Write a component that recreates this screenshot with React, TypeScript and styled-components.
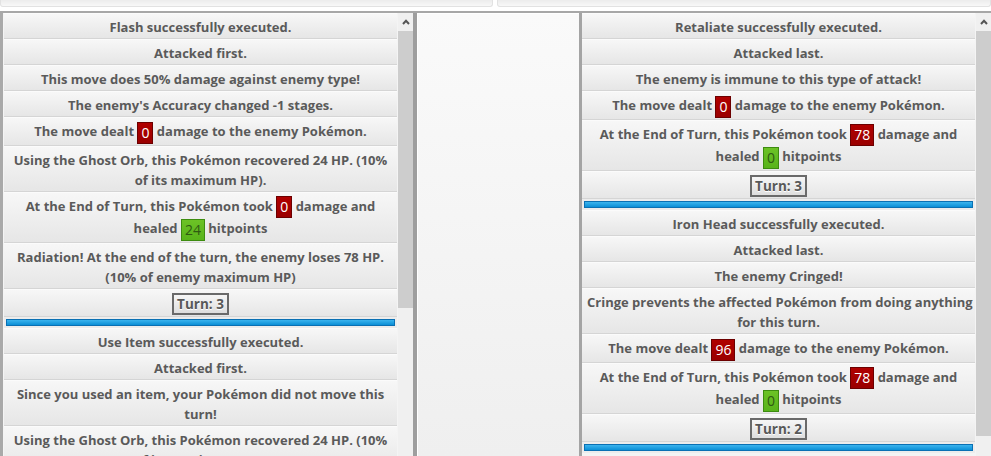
import React from 'react'
import styled, { createGlobalStyle } from 'styled-components'

const GlobalStyle = createGlobalStyle`
  html, body {
    margin: 0;
    padding: 0;
    background: #ffffff;
  }
  body {
    font-family: "Open Sans", "DejaVu Sans", sans-serif;
    overflow: hidden;
  }
`

const Page = styled.div`
  width: 991px;
  height: 456px;
  display: flex;
  flex-direction: column;
  overflow: hidden;
`

const TopBar = styled.div`
  display: flex;
  gap: 4px;
  height: 11px;
  padding-bottom: 4px;
  box-sizing: border-box;
`

const TopField = styled.div<{ $width: number }>`
  width: ${(p) => p.$width}px;
  flex: none;
  height: 7px;
  box-sizing: border-box;
  border: 1px solid #e2e2e2;
  border-top: none;
  border-radius: 0 0 3px 3px;
  background: linear-gradient(#ececec, #f8f8f8);
`

const Divider = styled.div`
  height: 2px;
  flex: none;
  background: #a7a7a7;
`

const Main = styled.div`
  flex: 1;
  min-height: 0;
  display: flex;
  overflow: hidden;
`

const SidePanel = styled.div<{ $left?: boolean }>`
  flex: none;
  width: ${(p) => (p.$left ? 417 : 409)}px;
  box-sizing: border-box;
  display: flex;
  align-items: flex-start;
  gap: 1px;
  background: #f4f4f4;
  border-left: ${(p) => (p.$left ? '3px solid #a9a9a9' : 'none')};
  border-right: ${(p) => (p.$left ? '4px solid #9e9e9e' : 'none')};
  padding-left: ${(p) => (p.$left ? 1 : 0)}px;
`

const Middle = styled.div`
  flex: none;
  width: 165px;
  box-sizing: border-box;
  border-right: 3px solid #a4a4a4;
  background: linear-gradient(#fafafa, #efefef);
  box-shadow: inset 1px 1px 0 #ffffff;
`

const Log = styled.div`
  width: 393px;
  flex: none;
  display: flex;
  flex-direction: column;
  background: #ececec;
`

const Row = styled.div`
  flex: none;
  padding: 3px 5px 1px;
  line-height: 20px;
  text-align: center;
  font-size: 13px;
  font-weight: 700;
  color: #5a5a5a;
  white-space: nowrap;
  background: linear-gradient(#f7f7f7, #e6e6e6);
  border-top: 1px solid #fbfbfb;
  border-bottom: 1px solid #d5d5d5;
`

const Badge = styled.span<{ $tone: 'red' | 'green' }>`
  display: inline-block;
  padding: 0 3px;
  line-height: 20px;
  font-size: 14px;
  font-weight: 400;
  vertical-align: middle;
  border: 1px solid ${(p) => (p.$tone === 'red' ? '#6c0000' : '#3d8c10')};
  background: ${(p) =>
    p.$tone === 'red'
      ? 'linear-gradient(#b00000, #9a0000)'
      : 'linear-gradient(#6cc226, #58b31a)'};
  color: ${(p) => (p.$tone === 'red' ? '#ffffff' : '#2f5a12')};
`

const Turn = styled.span`
  display: inline-block;
  padding: 0 3px;
  line-height: 18px;
  border: 2px solid #6a6a6a;
  background: linear-gradient(#f6f6f6, #dedede);
  color: #585858;
  font-size: 13.5px;
  font-weight: 700;
  text-shadow: 0 1px 0 #ffffff;
  vertical-align: middle;
`

const Bar = styled.div`
  flex: none;
  height: 5px;
  margin: 2px 2px;
  border: 1px solid #0a70b3;
  background: linear-gradient(#3bb4ee, #0b8fd6);
`

const Scrollbar = styled.div`
  width: 15px;
  flex: none;
  align-self: stretch;
  display: flex;
  flex-direction: column;
  background: #f0f0f0;
`

const ArrowButton = styled.div`
  height: 18px;
  flex: none;
  display: flex;
  align-items: center;
  justify-content: center;
  background: #f0f0f0;
`

const Thumb = styled.div<{ $height: number }>`
  height: ${(p) => p.$height}px;
  flex: none;
  background: #cdcdcd;
`

type Entry =
  | { kind: 'text'; content: React.ReactNode }
  | { kind: 'turn'; n: number }
  | { kind: 'bar' }

const red = (v: string) => <Badge $tone="red">{v}</Badge>
const green = (v: string) => <Badge $tone="green">{v}</Badge>

const t = (content: React.ReactNode): Entry => ({ kind: 'text', content })

const leftLog: Entry[] = [
  t('Flash successfully executed.'),
  t('Attacked first.'),
  t('This move does 50% damage against enemy type!'),
  t("The enemy's Accuracy changed -1 stages."),
  t(<>The move dealt {red('0')} damage to the enemy Pokémon.</>),
  t(<>Using the Ghost Orb, this Pokémon recovered 24 HP. (10%<br />of its maximum HP).</>),
  t(<>At the End of Turn, this Pokémon took {red('0')} damage and<br />healed {green('24')} hitpoints</>),
  t(<>Radiation! At the end of the turn, the enemy loses 78 HP.<br />(10% of enemy maximum HP)</>),
  { kind: 'turn', n: 3 },
  { kind: 'bar' },
  t('Use Item successfully executed.'),
  t('Attacked first.'),
  t(<>Since you used an item, your Pokémon did not move this<br />turn!</>),
  t(<>Using the Ghost Orb, this Pokémon recovered 24 HP. (10%<br />of its maximum HP).</>),
]

const rightLog: Entry[] = [
  t('Retaliate successfully executed.'),
  t('Attacked last.'),
  t('The enemy is immune to this type of attack!'),
  t(<>The move dealt {red('0')} damage to the enemy Pokémon.</>),
  t(<>At the End of Turn, this Pokémon took {red('78')} damage and<br />healed {green('0')} hitpoints</>),
  { kind: 'turn', n: 3 },
  { kind: 'bar' },
  t('Iron Head successfully executed.'),
  t('Attacked last.'),
  t('The enemy Cringed!'),
  t(<>Cringe prevents the affected Pokémon from doing anything<br />for this turn.</>),
  t(<>The move dealt {red('96')} damage to the enemy Pokémon.</>),
  t(<>At the End of Turn, this Pokémon took {red('78')} damage and<br />healed {green('0')} hitpoints</>),
  { kind: 'turn', n: 2 },
  { kind: 'bar' },
]

const UpArrow = () => (
  <svg width="8" height="6" viewBox="0 0 8 6">
    <polyline points="1,5 4,1.8 7,5" fill="none" stroke="#555" strokeWidth="2" />
  </svg>
)

const BattleLog = ({ entries }: { entries: Entry[] }) => (
  <Log>
    {entries.map((e, i) => {
      if (e.kind === 'bar') return <Bar key={i} />
      if (e.kind === 'turn')
        return (
          <Row key={i}>
            <Turn>Turn: {e.n}</Turn>
          </Row>
        )
      return <Row key={i}>{e.content}</Row>
    })}
  </Log>
)

const FakeScroll = ({ thumb }: { thumb: number }) => (
  <Scrollbar>
    <ArrowButton>
      <UpArrow />
    </ArrowButton>
    <Thumb $height={thumb} />
  </Scrollbar>
)

export default function App() {
  return (
    <Page>
      <GlobalStyle />
      <TopBar>
        <TopField $width={493} />
        <TopField $width={494} />
      </TopBar>
      <Divider />
      <Main>
        <SidePanel $left>
          <BattleLog entries={leftLog} />
          <FakeScroll thumb={277} />
        </SidePanel>
        <Middle />
        <SidePanel>
          <BattleLog entries={rightLog} />
          <FakeScroll thumb={405} />
        </SidePanel>
      </Main>
    </Page>
  )
}
